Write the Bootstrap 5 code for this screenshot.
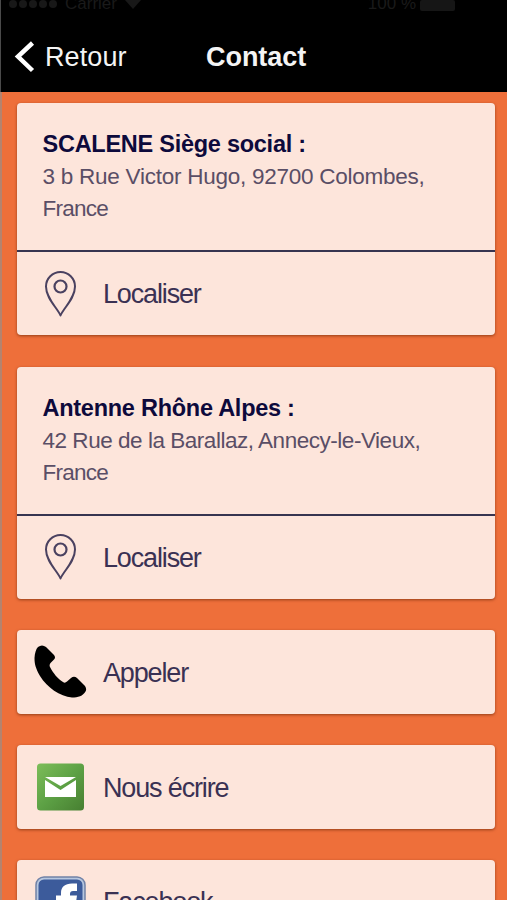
<!DOCTYPE html>
<html lang="fr">
<head>
<meta charset="utf-8">
<meta name="viewport" content="width=device-width, initial-scale=1">
<title>Contact</title>
<link rel="stylesheet" href="https://cdn.jsdelivr.net/npm/bootstrap@5.3.0/dist/css/bootstrap.min.css">
<style>
body { font-family: "Liberation Sans", Arial, sans-serif; background: #ee6f3a; }
.screen { height: 900px; box-shadow: inset 2px 0 #b5836f; }
.topbar { height: 92px; background: #000; border-left: 1px solid #4a4a4a; color: #f4f4f4; }
.status { height: 13px; color: #1a1a1a; font-size: 17px; line-height: 13px; padding: 0 52px 0 8px; }
.status-text { margin-top: -3px; }
.dots { gap: 2px; }
.dot { width: 8px; height: 8px; background: #181818; }
.battery { width: 35px; height: 11px; background: #161616; border-radius: 2px; }
.title-row { height: 79px; padding: 8px 0 0 13px; font-size: 27px; line-height: 33px; }
.back { width: 192px; }
.back-text { letter-spacing: .1px; margin-left: 10px; }
.title-text { letter-spacing: -.05px; }
.stack { padding: 11px 12px 0 17px; gap: 31.6px; }
.tile { background: #fde5db; border: 0; border-radius: 4px; box-shadow: 0 1px 3px rgba(90,30,0,.6); color: #3a3153; }
.address { height: 147px; padding: 25px 26px 0 25.5px; font-size: 22.5px; line-height: 32px; color: #5a4e66; }
.address-name { color: #0d0a3c; font-size: 23.5px; margin-bottom: 1px; }
.address-name span { letter-spacing: -.26px; }
.tight { letter-spacing: -.25px; }
.tighter { letter-spacing: -.47px; }
.country { letter-spacing: -.75px; }
.action { height: 83.5px; font-size: 27px; line-height: 32px; letter-spacing: -1.15px; }
.ruled { border-top: 2px solid #373450; height: 85px; }
.glyph { width: 86px; padding-left: 17px; }
.glyph svg { display: block; }
.nudge { padding-top: 2px; }
</style>
</head>
<body>
<svg width="0" height="0" class="position-absolute">
  <symbol id="pin" viewBox="0 0 32 46"><path d="M16 44.500C13 37 1.500 27.500 1.500 15.500a14.500 14.500 0 0 1 29 0C30.500 27.500 19 37 16 44.500z" fill="none" stroke="#4a4160" stroke-width="2" stroke-linejoin="round"/><circle cx="16" cy="15.500" r="6" fill="none" stroke="#4a4160" stroke-width="2.200"/></symbol>
</svg>
<div class="screen overflow-hidden">
  <header class="topbar">
    <div class="status d-flex align-items-start">
      <div class="dots d-flex me-2"><i class="dot rounded-circle"></i><i class="dot rounded-circle"></i><i class="dot rounded-circle"></i><i class="dot rounded-circle"></i><i class="dot rounded-circle"></i></div>
      <span class="status-text">Carrier</span>
      <svg width="16" height="9" viewBox="0 0 16 9" class="ms-2"><path d="M0 0h16L8 9z" fill="#181818"/></svg>
      <span class="status-text ms-auto me-1">100 %</span>
      <span class="battery"></span>
    </div>
    <div class="title-row d-flex align-items-start">
      <div class="back d-flex mt-3 pt-1 text-nowrap">
        <svg width="21" height="32" viewBox="0 0 21 32"><path d="M18.500 2L4 15.500 18.500 29.500" fill="none" stroke="#fff" stroke-width="4.500"/></svg>
        <span class="back-text">Retour</span>
      </div>
      <div class="title-text fw-bold mt-3 pt-1">Contact</div>
    </div>
  </header>
  <main class="stack d-flex flex-column">
    <section class="card tile">
      <div class="address text-nowrap">
        <div class="address-name fw-bold"><span>SCALENE Siège social :</span></div>
        <div class="tight">3 b Rue Victor Hugo, 92700 Colombes,</div>
        <div class="country">France</div>
      </div>
      <div class="action ruled d-flex align-items-center">
        <div class="glyph"><svg class="ms-2" width="37" height="46"><use href="#pin" width="37" height="46"/></svg></div>
        <span>Localiser</span>
      </div>
    </section>
    <section class="card tile">
      <div class="address text-nowrap">
        <div class="address-name fw-bold"><span>Antenne Rhône Alpes :</span></div>
        <div class="tighter">42 Rue de la Barallaz, Annecy-le-Vieux,</div>
        <div class="country">France</div>
      </div>
      <div class="action ruled d-flex align-items-center">
        <div class="glyph"><svg class="ms-2" width="37" height="46"><use href="#pin" width="37" height="46"/></svg></div>
        <span class="nudge">Localiser</span>
      </div>
    </section>
    <section class="card tile">
      <div class="action d-flex align-items-center">
        <div class="glyph"><svg width="53" height="53" viewBox="0 0 53 53"><path d="M4 2Q8-1 12 2L20 10Q22 12.500 20 14.500L16.500 18Q15 20 16 22C19 28 24 34 29 37Q31 38.500 33 36.500L37 33Q40 30.500 43 33L51 41Q53 44 51.500 46.500C49 51 44 52.500 38 52.500C26 51.500 13 42.500 6 31C1.500 23 .5 19 .5 13C.8 8 2 4 4 2z" fill="#000"/></svg></div>
        <span class="nudge">Appeler</span>
      </div>
    </section>
    <section class="card tile">
      <div class="action d-flex align-items-center">
        <div class="glyph"><svg width="53" height="48" viewBox="0 0 53 48"><defs><linearGradient id="green" x2="1" y2="1"><stop stop-color="#7dbd59"/><stop offset=".5" stop-color="#5da145"/><stop offset="1" stop-color="#477f31"/></linearGradient></defs><rect x="3" y=".5" width="47" height="47" rx="3.500" fill="url(#green)"/><path d="M11 14h31L26.500 23z M11 17L26.500 27 42 17V34H11z" fill="#fff"/></svg></div>
        <span class="nudge">Nous écrire</span>
      </div>
    </section>
    <section class="card tile">
      <div class="action d-flex align-items-center">
        <div class="glyph"><svg width="53" height="52" viewBox="0 0 53 52"><rect x="2" y="1" width="49" height="50" rx="8" fill="#b7c7df" stroke="#7182a7" stroke-width="1.500"/><rect x="4.500" y="3.500" width="44" height="45" rx="5.500" fill="#3c5b9b"/><path d="M43 7.500h-5c-7 0-11 3.500-11 9.500v2.500h-5v7h5V48h9V26.500h6l1-7h-7V18q0-3 3-3h4z" fill="#fff"/></svg></div>
        <span>Facebook</span>
      </div>
    </section>
  </main>
</div>
<script src="https://cdn.jsdelivr.net/npm/bootstrap@5.3.0/dist/js/bootstrap.bundle.min.js"></script>
</body>
</html>
